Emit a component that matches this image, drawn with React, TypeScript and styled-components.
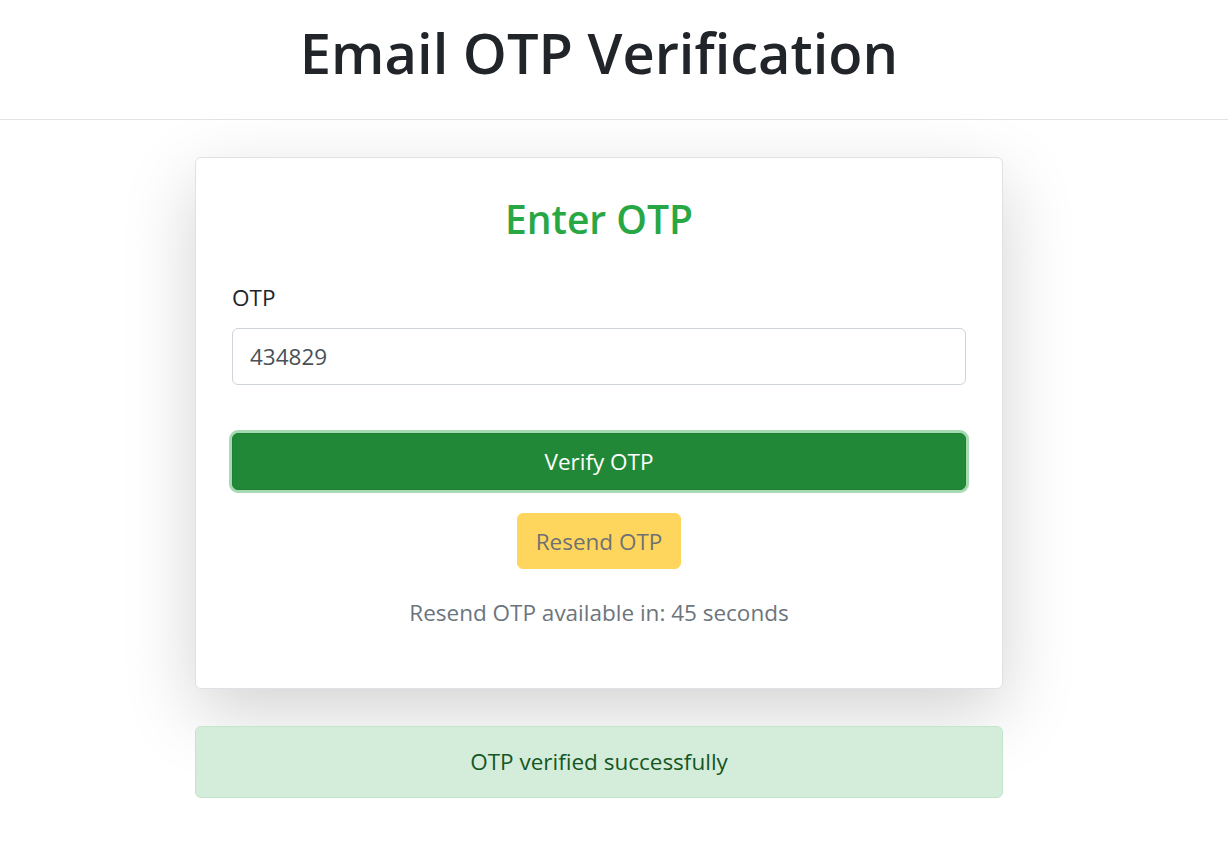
import React, { useState } from 'react';
import styled, { createGlobalStyle } from 'styled-components';

const GlobalStyle = createGlobalStyle`
  html, body {
    margin: 0;
    padding: 0;
    background: #ffffff;
  }
  body {
    font-family: 'Segoe UI', 'Open Sans', 'Noto Sans', sans-serif;
    color: #212529;
  }
  * {
    box-sizing: border-box;
  }
`;

const App = () => {
  const [otp, setOtp] = useState('434829');

  return (
    <>
      <GlobalStyle />
      <StyledHeader>
        <StyledTitle>Email OTP Verification</StyledTitle>
      </StyledHeader>
      <StyledMain>
        <StyledCard>
          <StyledCardTitle>Enter OTP</StyledCardTitle>
          <StyledLabel htmlFor='otp'>OTP</StyledLabel>
          <StyledInput id='otp' value={otp} onChange={(e) => setOtp(e.target.value)} />
          <StyledVerifyButton type='button'>Verify OTP</StyledVerifyButton>
          <StyledResendButton type='button' disabled>
            Resend OTP
          </StyledResendButton>
          <StyledCountdown>Resend OTP available in: 45 seconds</StyledCountdown>
        </StyledCard>
        <StyledAlert>OTP verified successfully</StyledAlert>
      </StyledMain>
    </>
  );
};

export default App;

const StyledHeader = styled.header`
  padding: 16px 30px 31px 0;
  border-bottom: 1px solid #e3e3e3;
  display: flex;
  justify-content: center;
`;

const StyledTitle = styled.h1`
  margin: 0;
  font-size: 56px;
  line-height: 72px;
  font-weight: 600;
  color: #212529;
`;

const StyledMain = styled.main`
  padding: 37px 30px 40px 0;
  display: flex;
  flex-direction: column;
  align-items: center;
`;

const StyledCard = styled.section`
  width: 808px;
  padding: 36px 36px 33px;
  background: #ffffff;
  border: 1px solid #dee2e6;
  border-radius: 6px;
  box-shadow: 0 24px 72px rgba(0, 0, 0, 0.175);
  display: flex;
  flex-direction: column;
`;

const StyledCardTitle = styled.h3`
  margin: 0 0 36px;
  font-size: 39px;
  line-height: 50px;
  font-weight: 600;
  color: #28a745;
  text-align: center;
`;

const StyledLabel = styled.label`
  font-size: 22.5px;
  line-height: 36px;
  margin-bottom: 12px;
`;

const StyledInput = styled.input`
  height: 57px;
  padding: 9px 17px;
  font-family: inherit;
  font-size: 22.5px;
  color: #495057;
  border: 1px solid #ced4da;
  border-radius: 6px;
  outline: none;
  margin-bottom: 48px;
`;

const StyledVerifyButton = styled.button`
  height: 57px;
  font-family: inherit;
  font-size: 22.5px;
  color: #ffffff;
  background: #218838;
  border: 1px solid #1e7e34;
  border-radius: 6px;
  box-shadow: 0 0 0 3px #a6dab2;
  cursor: pointer;
`;

const StyledResendButton = styled.button`
  align-self: center;
  margin-top: 23px;
  height: 56px;
  padding: 0 18px;
  font-family: inherit;
  font-size: 22.5px;
  color: #212529;
  background: #ffc107;
  border: 1px solid #ffc107;
  border-radius: 6px;
  opacity: 0.65;
`;

const StyledCountdown = styled.p`
  margin: 26px 0 24px;
  font-size: 22.5px;
  line-height: 36px;
  color: #6c757d;
  text-align: center;
`;

const StyledAlert = styled.div`
  width: 808px;
  margin-top: 37px;
  padding: 17px 24px;
  font-size: 22.5px;
  line-height: 36px;
  color: #155724;
  background: #d4edda;
  border: 1px solid #c3e6cb;
  border-radius: 6px;
  text-align: center;
`;
